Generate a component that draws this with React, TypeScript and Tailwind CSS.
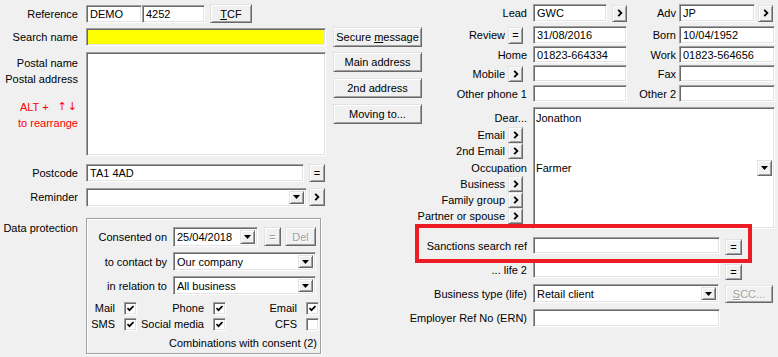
import type { ReactNode } from 'react';

const sunken =
  'border border-t-[#a0a0a0] border-l-[#a0a0a0] border-b-white border-r-white shadow-[inset_1px_1px_0_#696969,inset_-1px_-1px_0_#e3e3e3]';
const raised =
  'border border-t-[#e3e3e3] border-l-[#e3e3e3] border-b-[#696969] border-r-[#696969] bg-[#f0f0f0] shadow-[inset_1px_1px_0_#ffffff,inset_-1px_-1px_0_#a0a0a0]';
const disabledText = 'text-[#a0a0a0] [text-shadow:1px_1px_0_#ffffff]';

type Box = { className?: string; children?: ReactNode };

const Field = ({ className = '', children, yellow }: Box & { yellow?: boolean }) => (
  <div
    className={`${sunken} ${yellow ? 'bg-[#ffff00]' : 'bg-white'} flex shrink-0 items-center overflow-hidden whitespace-nowrap pl-[3px] ${className}`}
  >
    {children}
  </div>
);

const Btn = ({ className = '', children, disabled }: Box & { disabled?: boolean }) => (
  <div
    className={`${raised} flex shrink-0 items-center justify-center whitespace-nowrap ${disabled ? disabledText : ''} ${className}`}
  >
    {children}
  </div>
);

const DownArrow = () => (
  <svg width="7" height="4" viewBox="0 0 7 4">
    <polygon points="0,0 7,0 3.5,4" fill="#000" />
  </svg>
);

const Chevron = () => (
  <svg width="6" height="8" viewBox="0 0 6 8">
    <path d="M1.2 0.8 L4.4 4 L1.2 7.2" stroke="#000" strokeWidth="1.8" fill="none" />
  </svg>
);

const Go = ({ className = '' }: { className?: string }) => (
  <Btn className={`h-[16px] w-[15px] ${className}`}>
    <Chevron />
  </Btn>
);

const Combo = ({ className = '', children }: Box) => (
  <div className={`${sunken} flex shrink-0 items-stretch bg-white p-[2px] ${className}`}>
    <span className="flex flex-1 items-center overflow-hidden whitespace-nowrap pl-[1px]">{children}</span>
    <span className={`${raised} flex w-[15px] items-center justify-center`}>
      <DownArrow />
    </span>
  </div>
);

const Check = ({ checked }: { checked?: boolean }) => (
  <span className={`${sunken} flex h-[13px] w-[13px] shrink-0 items-center justify-center bg-white`}>
    {checked && (
      <svg width="7" height="7" viewBox="0 0 7 7">
        <path d="M0.5 3 L2.5 5.2 L6.5 1" stroke="#000" strokeWidth="1.7" fill="none" />
      </svg>
    )}
  </span>
);

// left column label, text ends at x=78
const Lbl = ({ children, className = '' }: Box) => (
  <div className={`w-[86px] shrink-0 pr-[8px] text-right whitespace-nowrap ${className}`}>{children}</div>
);

// right column label, text ends at x=527 (or beside a small button)
const RLbl = ({ children, btn }: Box & { btn?: ReactNode }) => (
  <div
    className={`flex h-full w-[111px] shrink-0 items-center justify-end whitespace-nowrap ${btn ? 'gap-[3px] pr-[10px]' : 'pr-[6px]'}`}
  >
    <span>{children}</span>
    {btn}
  </div>
);

const MidLbl = ({ children }: Box) => (
  <div className="w-[52px] shrink-0 pr-[3px] text-right whitespace-nowrap">{children}</div>
);

const ChkCell = ({ label, checked, className = '' }: { label: string; checked?: boolean; className?: string }) => (
  <div className={`flex items-center justify-end gap-[9px] ${className}`}>
    <span className="whitespace-nowrap">{label}</span>
    <Check checked={checked} />
  </div>
);

export default function App() {
  return (
    <div className="relative flex h-[357px] w-[778px] overflow-hidden bg-[#f0f0f0] font-['Liberation_Sans',Arial,sans-serif] text-[11px] leading-[14px] text-black">
      {/* Left column */}
      <div className="flex w-[326px] shrink-0 flex-col">
        <div className="mt-[4px] flex h-[19px] items-center">
          <Lbl>Reference</Lbl>
          <Field className="h-[18px] w-[56px]">DEMO</Field>
          <Field className="h-[18px] w-[63px]">4252</Field>
          <Btn className="ml-[5px] h-[19px] w-[42px]">
            <span>
              <u>T</u>CF
            </span>
          </Btn>
        </div>

        <div className="mt-[5px] flex h-[18px] items-center">
          <Lbl>Search name</Lbl>
          <Field yellow className="h-[18px] w-[240px]" />
        </div>

        <div className="mt-[6px] flex">
          <div className="flex w-[86px] shrink-0 flex-col items-end whitespace-nowrap pr-[8px] pt-[3px] leading-[16px]">
            <span>Postal name</span>
            <span>Postal address</span>
            <span className="mt-[12px] flex items-center text-[#ff0000]">
              ALT +
              <span className="ml-[9px] font-['DejaVu_Sans',sans-serif] text-[11px] tracking-[1px]">↑↓</span>
            </span>
            <span className="text-[#ff0000]">to rearrange</span>
          </div>
          <Field className="h-[104px] w-[240px]" />
        </div>

        <div className="mt-[8px] flex h-[18px] items-center">
          <Lbl>Postcode</Lbl>
          <Field className="h-[18px] w-[218px]">TA1 4AD</Field>
          <Btn className="ml-[5px] h-[18px] w-[16px]">=</Btn>
        </div>

        <div className="mt-[6px] flex h-[18px] items-center">
          <Lbl>Reminder</Lbl>
          <Combo className="h-[19px] w-[221px]" />
          <Btn className="ml-[2px] h-[18px] w-[16px]">
            <Chevron />
          </Btn>
        </div>

        <div className="mt-[12px] flex">
          <Lbl className="pt-[3px]">Data protection</Lbl>
          <div className="flex h-[136px] w-[235px] shrink-0 flex-col border border-[#a0a0a0] shadow-[inset_1px_1px_0_#ffffff,1px_1px_0_#ffffff]">
            <div className="mt-[8px] flex h-[19px] items-center">
              <div className="w-[86px] shrink-0 pr-[6px] text-right">Consented on</div>
              <Combo className="h-[20px] w-[85px]">25/04/2018</Combo>
              <Btn disabled className="ml-[6px] h-[19px] w-[17px]">
                =
              </Btn>
              <Btn disabled className="ml-[4px] h-[19px] w-[31px]">
                Del
              </Btn>
            </div>
            <div className="mt-[6px] flex h-[19px] items-center">
              <div className="w-[86px] shrink-0 pr-[6px] text-right">to contact by</div>
              <Combo className="h-[19px] w-[143px]">Our company</Combo>
            </div>
            <div className="mt-[5px] flex h-[19px] items-center">
              <div className="w-[86px] shrink-0 pr-[6px] text-right">in relation to</div>
              <Combo className="h-[19px] w-[143px]">All business</Combo>
            </div>
            <div className="mt-[5px] flex h-[16px] items-center">
              <ChkCell label="Mail" checked className="w-[50px]" />
              <ChkCell label="Phone" checked className="w-[89px]" />
              <ChkCell label="Email" checked className="w-[93px]" />
            </div>
            <div className="flex h-[16px] items-center">
              <ChkCell label="SMS" checked className="w-[50px]" />
              <ChkCell label="Social media" checked className="w-[89px]" />
              <ChkCell label="CFS" className="w-[93px]" />
            </div>
            <div className="mt-[4px] pr-[3px] text-right whitespace-nowrap">Combinations with consent (2)</div>
          </div>
        </div>
      </div>

      {/* Middle buttons */}
      <div className="ml-[7px] flex w-[89px] shrink-0 flex-col pt-[27px]">
        <Btn className="h-[20px]">
          <span>
            Secure <u>m</u>essage
          </span>
        </Btn>
        <Btn className="mt-[5px] h-[20px]">Main address</Btn>
        <Btn className="mt-[6px] h-[20px]">2nd address</Btn>
        <Btn className="mt-[6px] h-[20px]">Moving to...</Btn>
      </div>

      {/* Right column */}
      <div className="flex w-[356px] shrink-0 flex-col">
        <div className="mt-[4px] flex h-[18px] items-center">
          <RLbl>Lead</RLbl>
          <Field className="h-[18px] w-[74px]">GWC</Field>
          <Go className="ml-[5px] h-[17px]" />
          <MidLbl>Adv</MidLbl>
          <Field className="h-[18px] w-[76px]">JP</Field>
          <Go className="ml-[3px] h-[17px]" />
        </div>
        <div className="mt-[4px] flex h-[18px] items-center">
          <RLbl btn={<Btn className="h-[17px] w-[15px]">=</Btn>}>Review</RLbl>
          <Field className="h-[18px] w-[94px]">31/08/2016</Field>
          <MidLbl>Born</MidLbl>
          <Field className="h-[18px] w-[96px]">10/04/1952</Field>
        </div>
        <div className="mt-[2px] flex h-[17px] items-center">
          <RLbl>Home</RLbl>
          <Field className="h-[17px] w-[94px]">01823-664334</Field>
          <MidLbl>Work</MidLbl>
          <Field className="h-[17px] w-[96px]">01823-564656</Field>
        </div>
        <div className="mt-[2px] flex h-[17px] items-center">
          <RLbl btn={<Go />}>Mobile</RLbl>
          <Field className="h-[17px] w-[94px]" />
          <MidLbl>Fax</MidLbl>
          <Field className="h-[17px] w-[96px]" />
        </div>
        <div className="mt-[3px] flex h-[17px] items-center">
          <RLbl>Other phone 1</RLbl>
          <Field className="h-[17px] w-[94px]" />
          <MidLbl>Other 2</MidLbl>
          <Field className="h-[17px] w-[96px]" />
        </div>

        <div className="mt-[5px] flex">
          <div className="flex w-[111px] shrink-0 flex-col pt-[2px]">
            <div className="h-[18px]">
              <RLbl>Dear...</RLbl>
            </div>
            <div className="h-[16px]">
              <RLbl btn={<Go />}>Email</RLbl>
            </div>
            <div className="h-[16px]">
              <RLbl btn={<Go />}>2nd Email</RLbl>
            </div>
            <div className="h-[17px]">
              <RLbl>Occupation</RLbl>
            </div>
            <div className="h-[16px]">
              <RLbl btn={<Go />}>Business</RLbl>
            </div>
            <div className="h-[16px]">
              <RLbl btn={<Go />}>Family group</RLbl>
            </div>
            <div className="h-[16px]">
              <RLbl btn={<Go />}>Partner or spouse</RLbl>
            </div>
          </div>
          <div className={`${sunken} flex h-[122px] w-[242px] shrink-0 flex-col bg-white p-[2px]`}>
            <div className="flex h-[16px] items-center">Jonathon</div>
            <div className="mt-[34px] flex h-[16px] items-center">
              <span className="flex-1">Farmer</span>
              <Btn className="h-[16px] w-[15px]">
                <DownArrow />
              </Btn>
            </div>
          </div>
        </div>

        <div className="mt-[8px] flex h-[17px] items-start">
          <RLbl>Sanctions search ref</RLbl>
          <Field className="h-[17px] w-[187px]" />
          <Btn className="ml-[5px] mt-[2px] h-[16px] w-[17px]">=</Btn>
        </div>
        <div className="mt-[7px] flex h-[17px] items-start">
          <RLbl>... life 2</RLbl>
          <Field className="h-[17px] w-[187px]" />
          <Btn className="ml-[5px] mt-[3px] h-[16px] w-[17px]">=</Btn>
        </div>
        <div className="mt-[6px] flex h-[19px] items-center">
          <RLbl>Business type (life)</RLbl>
          <Combo className="h-[19px] w-[186px]">Retail client</Combo>
          <Btn disabled className="ml-[6px] h-[18px] w-[48px]">
            <span>
              <u>S</u>CC...
            </span>
          </Btn>
        </div>
        <div className="mt-[6px] flex h-[18px] items-center">
          <RLbl>Employer Ref No (ERN)</RLbl>
          <Field className="h-[18px] w-[187px]" />
        </div>
      </div>

      {/* highlight annotation */}
      <div className="pointer-events-none absolute left-[415px] top-[224px] h-[39px] w-[337px] border-[4px] border-[#ed1c24]" />
    </div>
  );
}
